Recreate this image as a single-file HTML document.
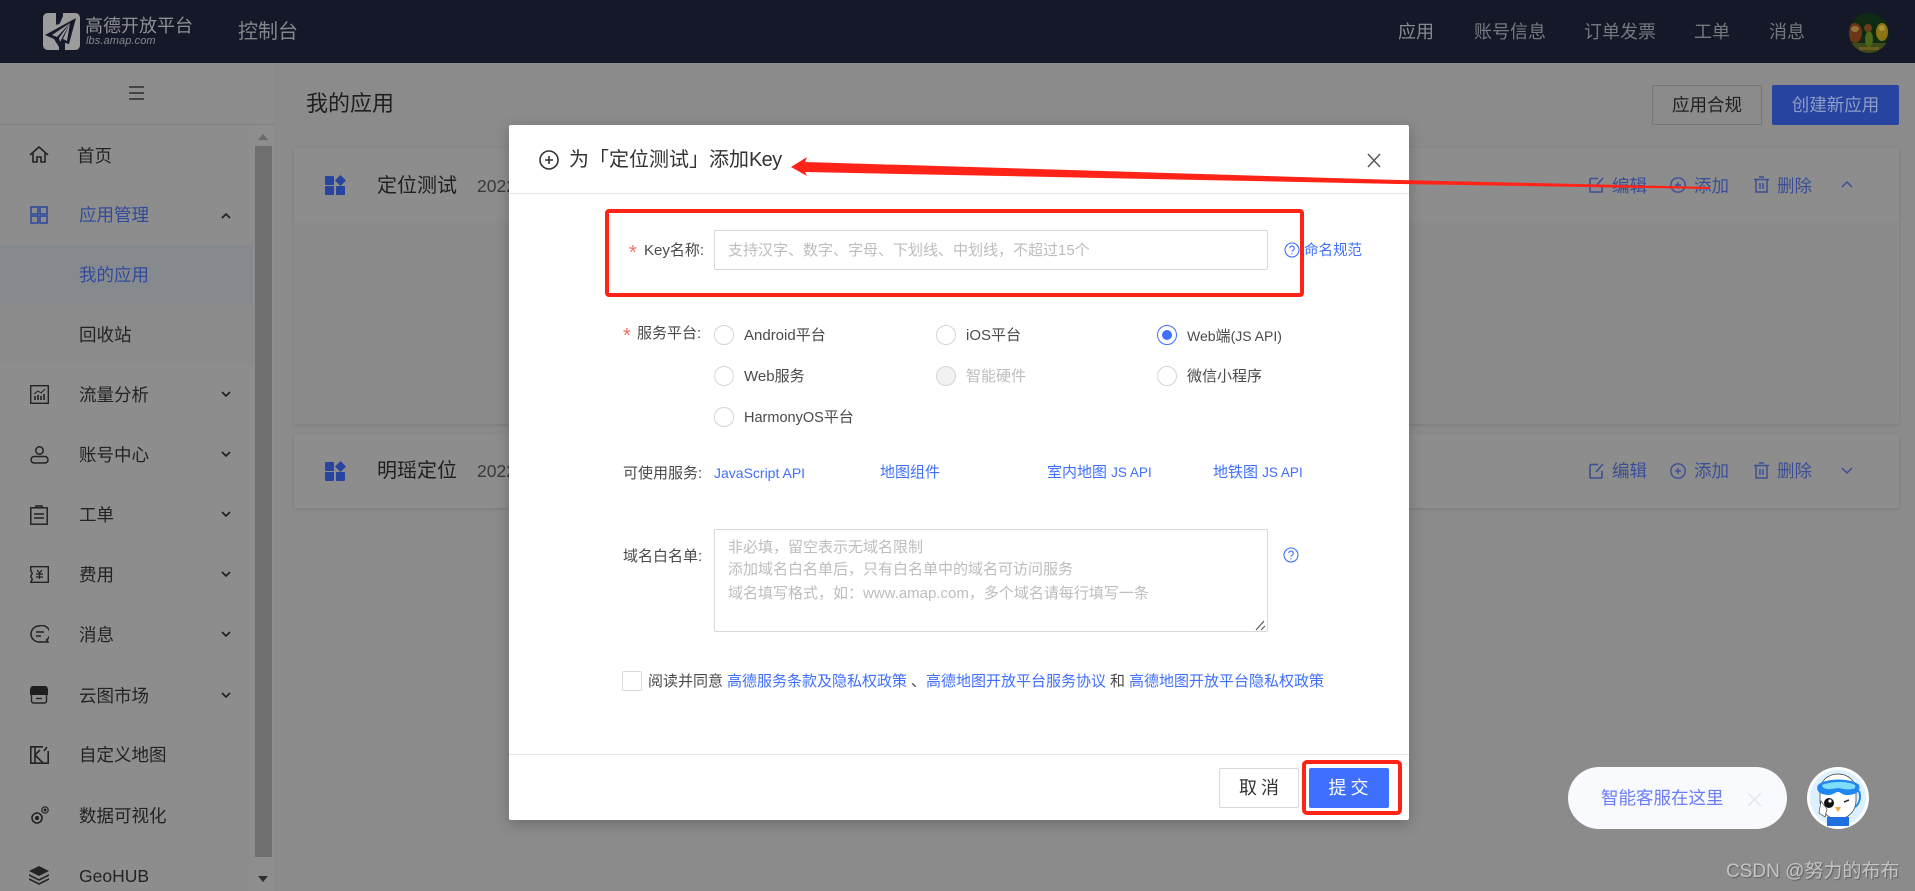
<!DOCTYPE html>
<html lang="zh-CN"><head><meta charset="utf-8"><title>高德开放平台 控制台</title>
<style>
*{box-sizing:border-box}
html,body{margin:0;padding:0;width:1915px;height:891px;overflow:hidden;background:#8a8b8a;font-family:"Liberation Sans","Noto Sans CJK SC",sans-serif}
.t{position:absolute;white-space:nowrap;line-height:24px;height:24px}
.abs,svg{position:absolute}
.side{color:#232323;font-size:17.5px}
.blue{color:#324a9b}
.nav{color:#77787f;font-size:18px}
.act{color:#3c4f96;font-size:17.5px}
.f{font-size:15px;color:#4a4a4a}
.l{font-size:15px;color:#3f6fff}
.ph{font-size:15px;color:#bdbdbd}
.req{font-size:20px;color:#f56c5c}
.radio{position:absolute;width:20px;height:20px;border:1px solid #d5d5d5;border-radius:50%;background:#fff}
.lat{font-size:14px}
</style></head><body>

<!-- header -->
<div class="abs" style="left:0;top:0;width:1915px;height:63px;background:#141829"></div>
<svg style="left:43px;top:13px" width="37" height="37" viewBox="0 0 37 37">
<path d="M5 0h8v11c0 1 3 1 4-1L20 3V0h12c3 0 5 2 5 5v27c0 3-2 5-5 5H22v-7c-2-3-5-3-6 0v7H5c-3 0-5-2-5-5V5c0-3 2-5 5-5z" fill="#9c9c9c"/>
<path d="M33 5 2 22l9 4 5 8 3-5 7 2z" fill="#141829"/>
<path d="M27 10 9 22l5 2zM27 10 16 25l1 4zM27 10 20 26l4 2z" fill="#9c9c9c"/>
</svg>
<div class="t" style="left:85px;top:14px;font-size:18px;color:#8f8f93">高德开放平台</div>
<div class="t" style="left:86px;top:29px;font-size:11px;font-style:italic;color:#87888d;letter-spacing:.1px">lbs.amap.com</div>
<div class="t" style="left:238px;top:20px;font-size:20px;color:#85868b">控制台</div>
<div class="t nav" style="left:1398px;top:20px;color:#8a8b90">应用</div>
<div class="t nav" style="left:1474px;top:20px">账号信息</div>
<div class="t nav" style="left:1584px;top:20px">订单发票</div>
<div class="t nav" style="left:1694px;top:20px">工单</div>
<div class="t nav" style="left:1769px;top:20px">消息</div>
<svg style="left:1849px;top:13px" width="40" height="40" viewBox="0 0 40 40">
<defs><clipPath id="av"><circle cx="20" cy="20" r="20"/></clipPath></defs>
<g clip-path="url(#av)"><rect width="40" height="40" fill="#0f2a12"/>
<rect y="30" width="40" height="10" fill="#3f4a1a"/>
<ellipse cx="6" cy="20" rx="7" ry="10" fill="#6a3616"/><ellipse cx="6" cy="16" rx="4" ry="3" fill="#94703c"/>
<ellipse cx="33" cy="19" rx="6" ry="9" fill="#8c7316"/><ellipse cx="33" cy="15" rx="3" ry="3" fill="#a8953e"/>
<ellipse cx="20" cy="26" rx="4" ry="8" fill="#4e6618"/><circle cx="19" cy="15" r="4" fill="#6a3b1c"/>
<rect x="10" y="34" width="20" height="3" fill="#6c5c20"/></g></svg>

<!-- sidebar -->
<div class="abs" style="left:0;top:63px;width:274px;height:828px;background:#8c8d8c"></div>
<div class="abs" style="left:0;top:124px;width:274px;height:1px;background:#7f807f"></div>
<div class="abs" style="left:0;top:245px;width:253px;height:60px;background:#868a8f"></div>
<div class="abs" style="left:0;top:305px;width:253px;height:60px;background:#8a8b8a"></div>
<div class="abs" style="left:253px;top:125px;width:21px;height:766px;background:#8e8e8e"></div>
<div class="abs" style="left:255px;top:146px;width:17px;height:711px;background:#6f6f6f"></div>
<svg style="left:258px;top:134px" width="10" height="6"><path d="M5 0l5 6H0z" fill="#6a6a6a"/></svg>
<svg style="left:258px;top:876px" width="10" height="6"><path d="M5 6l5-6H0z" fill="#2e2e2e"/></svg>
<svg style="left:129px;top:86px" width="16" height="14"><path d="M0 1h15M0 7h15M0 13h15" stroke="#2c2c2c" stroke-width="1.4"/></svg>

<svg style="left:29px;top:145px" width="20" height="20" viewBox="0 0 20 20" fill="none" stroke="#232323" stroke-width="1.6"><path d="M1 10 10 2l9 8M4 8v9h4v-5h4v5h4V8"/></svg>
<div class="t side" style="left:77px;top:144px">首页</div>
<svg style="left:30px;top:206px" width="18" height="18" viewBox="0 0 18 18" fill="none" stroke="#324a9b" stroke-width="1.6"><rect x="1" y="1" width="7" height="7"/><rect x="10" y="1" width="7" height="7"/><rect x="1" y="10" width="7" height="7"/><rect x="10" y="10" width="7" height="7"/></svg>
<div class="t side blue" style="left:79px;top:203px">应用管理</div>
<svg style="left:221px;top:212px" width="10" height="7"><path d="M1 6l4-4 4 4" fill="none" stroke="#1f1f1f" stroke-width="1.6"/></svg>
<div class="t side blue" style="left:79px;top:263px">我的应用</div>
<div class="t side" style="left:79px;top:323px">回收站</div>

<svg style="left:30px;top:385px" width="19" height="19" viewBox="0 0 19 19" fill="none" stroke="#232323" stroke-width="1.4"><rect x=".7" y=".7" width="17.6" height="17.6"/><path d="M4 9l4-3 3 2 4-4" stroke-width="1"/><path d="M5 15v-4M8 15v-5M11 15v-4M14 15v-6" stroke-width="1.6"/></svg>
<div class="t side" style="left:79px;top:383px">流量分析</div>
<svg style="left:221px;top:391px" width="10" height="7"><path d="M1 1l4 4 4-4" fill="none" stroke="#1f1f1f" stroke-width="1.6"/></svg>

<svg style="left:30px;top:446px" width="19" height="18" viewBox="0 0 19 18" fill="none" stroke="#232323" stroke-width="1.5"><circle cx="9.5" cy="4.5" r="3.7"/><rect x="1" y="10.500" width="17" height="6.500" rx="3.200"/></svg>
<div class="t side" style="left:79px;top:443px">账号中心</div>
<svg style="left:221px;top:451px" width="10" height="7"><path d="M1 1l4 4 4-4" fill="none" stroke="#1f1f1f" stroke-width="1.6"/></svg>

<svg style="left:30px;top:505px" width="18" height="20" viewBox="0 0 18 20" fill="none" stroke="#232323" stroke-width="1.5"><rect x=".8" y="2.800" width="16.400" height="16.400"/><path d="M6 2.500V1h6v1.500M4 9h10M4 13h10"/></svg>
<div class="t side" style="left:79px;top:503px">工单</div>
<svg style="left:221px;top:511px" width="10" height="7"><path d="M1 1l4 4 4-4" fill="none" stroke="#1f1f1f" stroke-width="1.6"/></svg>

<svg style="left:30px;top:566px" width="19" height="17" viewBox="0 0 19 17" fill="none" stroke="#232323" stroke-width="1.4"><path d="M.7.7h17.600v15.600H.7l1.600-3-1.600-3 1.600-3-1.600-3z"/><path d="M7 4l2.500 3L12 4M6 8h7M6 11h7M9.500 7v6" stroke-width="1.2"/></svg>
<div class="t side" style="left:79px;top:563px">费用</div>
<svg style="left:221px;top:571px" width="10" height="7"><path d="M1 1l4 4 4-4" fill="none" stroke="#1f1f1f" stroke-width="1.6"/></svg>

<svg style="left:30px;top:625px" width="19" height="19" viewBox="0 0 19 19" fill="none" stroke="#232323" stroke-width="1.5"><path d="M9 1a8 8 0 1 0 0 16h9l-1.500-2A8 8 0 0 0 9 1z"/><path d="M6 7h8M6 11h5"/></svg>
<div class="t side" style="left:79px;top:623px">消息</div>
<svg style="left:221px;top:631px" width="10" height="7"><path d="M1 1l4 4 4-4" fill="none" stroke="#1f1f1f" stroke-width="1.6"/></svg>

<svg style="left:30px;top:686px" width="18" height="18" viewBox="0 0 18 18"><path d="M3 0h12c2 0 3 2 3 4v5H0V4c0-2 1-4 3-4z" fill="#1f1f1f"/><path d="M1.500 9v6c0 1 1 2 2 2h11c1 0 2-1 2-2V9" fill="none" stroke="#232323" stroke-width="1.4"/><path d="M6 12.500h6" stroke="#232323" stroke-width="1.4"/></svg>
<div class="t side" style="left:79px;top:684px">云图市场</div>
<svg style="left:221px;top:692px" width="10" height="7"><path d="M1 1l4 4 4-4" fill="none" stroke="#1f1f1f" stroke-width="1.6"/></svg>

<svg style="left:30px;top:746px" width="19" height="18" viewBox="0 0 19 18" fill="none" stroke="#232323" stroke-width="1.6"><path d="M13 .8H.8v16.400h17.400V5M5 1v16M5 9l8 8M5 9l5-5M14 5l3-4"/></svg>
<div class="t side" style="left:79px;top:743px">自定义地图</div>

<svg style="left:31px;top:806px" width="18" height="18" viewBox="0 0 18 18" fill="none" stroke="#232323"><circle cx="6" cy="12" r="5" stroke-width="1.6"/><circle cx="6" cy="12" r="1.600" fill="#232323"/><circle cx="14" cy="4" r="3.200" stroke-width="1.2"/><circle cx="14" cy="4" r="1" fill="#232323"/></svg>
<div class="t side" style="left:79px;top:804px">数据可视化</div>

<svg style="left:29px;top:866px" width="20" height="19" viewBox="0 0 20 19"><path d="M10 0l10 5-10 5L0 5z" fill="#232323"/><path d="M0 9l10 5 10-5M0 13l10 5 10-5" fill="none" stroke="#232323" stroke-width="1.6"/></svg>
<div class="t side" style="left:79px;top:864px">GeoHUB</div>

<!-- main -->
<div class="t" style="left:306px;top:92px;font-size:22px;color:#1f1f1f">我的应用</div>
<div class="abs" style="left:1652px;top:85px;width:110px;height:40px;border:1px solid #767676;border-radius:2px;color:#1f1f1f;font-size:17.5px;line-height:38px;text-align:center">应用合规</div>
<div class="abs" style="left:1772px;top:85px;width:127px;height:40px;background:#2744a0;border-radius:2px;color:#8e9dc6;font-size:17.5px;line-height:40px;text-align:center">创建新应用</div>

<div class="abs" style="left:294px;top:148px;width:1605px;height:276px;background:#898a89;box-shadow:0 1px 3px rgba(0,0,0,.12)"></div>
<div class="abs" style="left:294px;top:148px;width:1605px;height:73px;background:#8c8d8c"></div>
<div class="abs" style="left:294px;top:434px;width:1605px;height:74px;background:#8c8d8c;box-shadow:0 1px 3px rgba(0,0,0,.12)"></div>

<svg style="left:325px;top:175px" width="22" height="20" viewBox="0 0 22 20" fill="#2744a0"><rect y="1" width="9" height="9" rx="1"/><rect y="11" width="9" height="9" rx="1"/><rect x="11" y="11" width="9" height="9" rx="1"/><path d="M15.500 0 21 5.500 15.500 11 10 5.500z"/></svg>
<div class="t" style="left:377px;top:174px;font-size:20px;color:#202020">定位测试</div>
<div class="t" style="left:477px;top:174px;font-size:17.5px;color:#3a3a3a">2022</div>
<svg style="left:325px;top:461px" width="22" height="20" viewBox="0 0 22 20" fill="#2744a0"><rect y="1" width="9" height="9" rx="1"/><rect y="11" width="9" height="9" rx="1"/><rect x="11" y="11" width="9" height="9" rx="1"/><path d="M15.500 0 21 5.500 15.500 11 10 5.500z"/></svg>
<div class="t" style="left:377px;top:459px;font-size:20px;color:#202020">明瑶定位</div>
<div class="t" style="left:477px;top:459px;font-size:17.5px;color:#3a3a3a">2022</div>

<svg style="left:1589px;top:177px" width="15" height="16" viewBox="0 0 15 16" fill="none" stroke="#3c4f96" stroke-width="1.6"><path d="M9 1.500H2a1 1 0 0 0-1 1V14a1 1 0 0 0 1 1h10a1 1 0 0 0 1-1V8M7 9l7-8"/></svg>
<div class="t act" style="left:1612px;top:174px">编辑</div>
<svg style="left:1670px;top:177px" width="16" height="16" viewBox="0 0 16 16" fill="none" stroke="#3c4f96" stroke-width="1.4"><circle cx="8" cy="8" r="7.200"/><path d="M5 8h6M8 5v6"/></svg>
<div class="t act" style="left:1694px;top:174px">添加</div>
<svg style="left:1754px;top:176px" width="15" height="17" viewBox="0 0 15 17" fill="none" stroke="#3c4f96" stroke-width="1.5"><path d="M0 3.500h15M5 1h5M2 3.500V16h11V3.500M6 7v6M9 7v6"/></svg>
<div class="t act" style="left:1777px;top:174px">删除</div>
<svg style="left:1841px;top:180px" width="12" height="8"><path d="M1 7l5-5 5 5" fill="none" stroke="#3c4f96" stroke-width="1.5"/></svg>

<svg style="left:1589px;top:463px" width="15" height="16" viewBox="0 0 15 16" fill="none" stroke="#3c4f96" stroke-width="1.6"><path d="M9 1.500H2a1 1 0 0 0-1 1V14a1 1 0 0 0 1 1h10a1 1 0 0 0 1-1V8M7 9l7-8"/></svg>
<div class="t act" style="left:1612px;top:459px">编辑</div>
<svg style="left:1670px;top:463px" width="16" height="16" viewBox="0 0 16 16" fill="none" stroke="#3c4f96" stroke-width="1.4"><circle cx="8" cy="8" r="7.200"/><path d="M5 8h6M8 5v6"/></svg>
<div class="t act" style="left:1694px;top:459px">添加</div>
<svg style="left:1754px;top:462px" width="15" height="17" viewBox="0 0 15 17" fill="none" stroke="#3c4f96" stroke-width="1.5"><path d="M0 3.500h15M5 1h5M2 3.500V16h11V3.500M6 7v6M9 7v6"/></svg>
<div class="t act" style="left:1777px;top:459px">删除</div>
<svg style="left:1841px;top:467px" width="12" height="8"><path d="M1 1l5 5 5-5" fill="none" stroke="#3c4f96" stroke-width="1.5"/></svg>

<!-- modal -->
<div class="abs" style="left:509px;top:125px;width:900px;height:695px;background:#fff;border-radius:2px;box-shadow:0 4px 14px rgba(0,0,0,.22)"></div>
<div class="abs" style="left:509px;top:193px;width:900px;height:1px;background:#e4e4e4"></div>
<div class="abs" style="left:509px;top:754px;width:900px;height:1px;background:#e4e4e4"></div>

<svg style="left:539px;top:150px" width="20" height="20" viewBox="0 0 20 20" fill="none" stroke="#333" stroke-width="1.6"><circle cx="10" cy="10" r="9"/><path d="M6 10h8M10 6v8"/></svg>
<div class="t" style="left:569px;top:148px;font-size:20px;color:#333">为「定位测试」添加<span style="letter-spacing:-.7px">Key</span></div>
<svg style="left:1367px;top:153px" width="14" height="15" viewBox="0 0 14 15"><path d="M1 1l12 13M13 1 1 14" stroke="#555" stroke-width="1.4" fill="none"/></svg>

<div class="t req" style="left:629px;top:241px">*</div>
<div class="t f" style="left:644px;top:239px">Key名称:</div>
<div class="abs" style="left:714px;top:230px;width:554px;height:40px;border:1px solid #d9d9d9;border-radius:2px"></div>
<div class="t ph" style="left:728px;top:239px">支持汉字、数字、字母、下划线、中划线&#xFF0C;不超过15个</div>
<svg style="left:1284px;top:242px" width="16" height="16" viewBox="0 0 16 16" fill="none" stroke="#3f6fff" stroke-width="1.1"><circle cx="8" cy="8" r="7"/><path d="M5.800 6.200a2.200 2.200 0 1 1 3.200 2c-.7.400-1 .8-1 1.600"/><path d="M8 11.200v1.200"/></svg>
<div class="t l" style="left:1304px;top:239px;font-size:14.5px">命名规范</div>

<div class="t req" style="left:623px;top:324px">*</div>
<div class="t f" style="left:637px;top:322px">服务平台:</div>
<div class="radio" style="left:714px;top:325px"></div><div class="t f" style="left:744px;top:324px">Android平台</div>
<div class="radio" style="left:936px;top:325px"></div><div class="t f" style="left:966px;top:324px">iOS平台</div>
<div class="radio" style="left:1157px;top:325px;border-color:#3f6fff"></div><div class="abs" style="left:1162px;top:330px;width:10px;height:10px;border-radius:50%;background:#3f6fff"></div><div class="t f" style="left:1187px;top:324px"><span class="lat">Web</span>端<span class="lat">(JS API)</span></div>
<div class="radio" style="left:714px;top:366px"></div><div class="t f" style="left:744px;top:365px">Web服务</div>
<div class="radio" style="left:936px;top:366px;background:#f2f2f2"></div><div class="t f" style="left:966px;top:365px;color:#bdbdbd">智能硬件</div>
<div class="radio" style="left:1157px;top:366px"></div><div class="t f" style="left:1187px;top:365px">微信小程序</div>
<div class="radio" style="left:714px;top:407px"></div><div class="t f" style="left:744px;top:406px"><span style="font-size:14.5px">HarmonyOS</span>平台</div>

<div class="t f" style="left:623px;top:462px">可使用服务:</div>
<div class="t l" style="left:714px;top:461px;font-size:14px">JavaScript API</div>
<div class="t l" style="left:880px;top:461px">地图组件</div>
<div class="t l" style="left:1047px;top:461px">室内地图 <span style="font-size:13.5px">JS API</span></div>
<div class="t l" style="left:1213px;top:461px">地铁图 <span style="font-size:13.5px">JS API</span></div>

<div class="t f" style="left:623px;top:545px">域名白名单:</div>
<div class="abs" style="left:714px;top:529px;width:554px;height:103px;border:1px solid #d9d9d9;border-radius:2px"></div>
<div class="t ph" style="left:728px;top:536px">非必填&#xFF0C;留空表示无域名限制</div>
<div class="t ph" style="left:728px;top:558px">添加域名白名单后&#xFF0C;只有白名单中的域名可访问服务</div>
<div class="t ph" style="left:728px;top:582px">域名填写格式&#xFF0C;如&#xFF1A;www.amap.com&#xFF0C;多个域名请每行填写一条</div>
<svg style="left:1255px;top:620px" width="11" height="11"><path d="M1 10 9 1M6 10l4-4" stroke="#555" stroke-width="1.1"/></svg>
<svg style="left:1283px;top:547px" width="16" height="16" viewBox="0 0 16 16" fill="none" stroke="#3f6fff" stroke-width="1.1"><circle cx="8" cy="8" r="7"/><path d="M5.800 6.200a2.200 2.200 0 1 1 3.200 2c-.7.400-1 .8-1 1.600"/><path d="M8 11.200v1.200"/></svg>

<div class="abs" style="left:622px;top:671px;width:20px;height:20px;border:1px solid #d9d9d9;border-radius:2px"></div>
<div class="t f" style="left:648px;top:670px">阅读并同意</div>
<div class="t l" style="left:727px;top:670px">高德服务条款及隐私权政策</div>
<div class="t f" style="left:911px;top:670px">、</div>
<div class="t l" style="left:926px;top:670px">高德地图开放平台服务协议</div>
<div class="t f" style="left:1110px;top:670px">和</div>
<div class="t l" style="left:1129px;top:670px">高德地图开放平台隐私权政策</div>

<div class="abs" style="left:1219px;top:768px;width:80px;height:40px;padding-left:4px;border:1px solid #d9d9d9;border-radius:2px;color:#333;font-size:18px;line-height:38px;text-align:center;letter-spacing:4px">取消</div>
<div class="abs" style="left:1309px;top:768px;width:80px;height:40px;padding-left:3px;background:#3f6fff;border-radius:2px;color:#fff;font-size:18px;line-height:40px;text-align:center;letter-spacing:4px">提交</div>

<!-- annotations -->
<div class="abs" style="left:605px;top:209px;width:699px;height:88px;border:4px solid #ff2318;border-radius:4px"></div>
<div class="abs" style="left:1302px;top:760px;width:100px;height:55px;border:4px solid #ff2318;border-radius:5px"></div>
<svg style="left:0;top:0" width="1915" height="891"><polygon points="791,167 807,157 805,162 1400,180 1710,187 1710,189 1400,184 805,172 807,176" fill="#ff2318"/></svg>

<!-- widget -->
<div class="abs" style="left:1568px;top:767px;width:219px;height:62px;border-radius:31px;background:#f9fafd"></div>
<div class="t" style="left:1601px;top:786px;font-size:17.5px;color:#6a7cf7">智能客服在这里</div>
<svg style="left:1747px;top:792px" width="15" height="15"><path d="M1 1l13 13M14 1 1 14" stroke="#e3e6f0" stroke-width="1.5"/></svg>
<svg style="left:1807px;top:767px" width="62" height="62" viewBox="0 0 62 62">
<circle cx="31" cy="31" r="31" fill="#fff"/><circle cx="31" cy="31" r="28" fill="#dcf1fd"/>
<path d="M13 24c0-10 8-17 18-17s18 7 18 17v10c0 10-8 18-18 18S13 44 13 34z" fill="#fff" stroke="#333" stroke-width=".7"/>
<path d="M11 18c6-6 28-8 40-1 2 1 2 6 0 8-4 3-9 3-12 3-4 0-5-3-8-3s-5 3-9 3c-4 0-9-1-11-4-1-2-1-5 0-6z" fill="#1f87ee"/>
<path d="M15 18c6-3 24-5 33 0 1 1 0 4-2 4-6 1-9 0-15-1-6 1-10 2-14 0-1 0-2-2-2-3z" fill="#7fdcfb"/>
<circle cx="22" cy="36" r="5" fill="#111"/><circle cx="23" cy="34" r="1.600" fill="#fff"/>
<path d="M37 35l5-2" stroke="#333" stroke-width="1.500"/>
<path d="M28 40h6l-3 5z" fill="#f7a43a"/>
<path d="M20 50h22v9H20z" fill="#1f6fe0"/><path d="M14 34l-2 12 6 4 2-8z" fill="#fff" stroke="#333" stroke-width=".6"/>
<path d="M52 24c2 6 1 12-4 16" fill="none" stroke="#1f87ee" stroke-width="2"/>
</svg>

<div class="t" style="left:1726px;top:860px;font-size:19px;color:#c4c4c4;text-shadow:1px 1px 1px #5f5f5f">CSDN @努力的布布</div>

</body></html>
